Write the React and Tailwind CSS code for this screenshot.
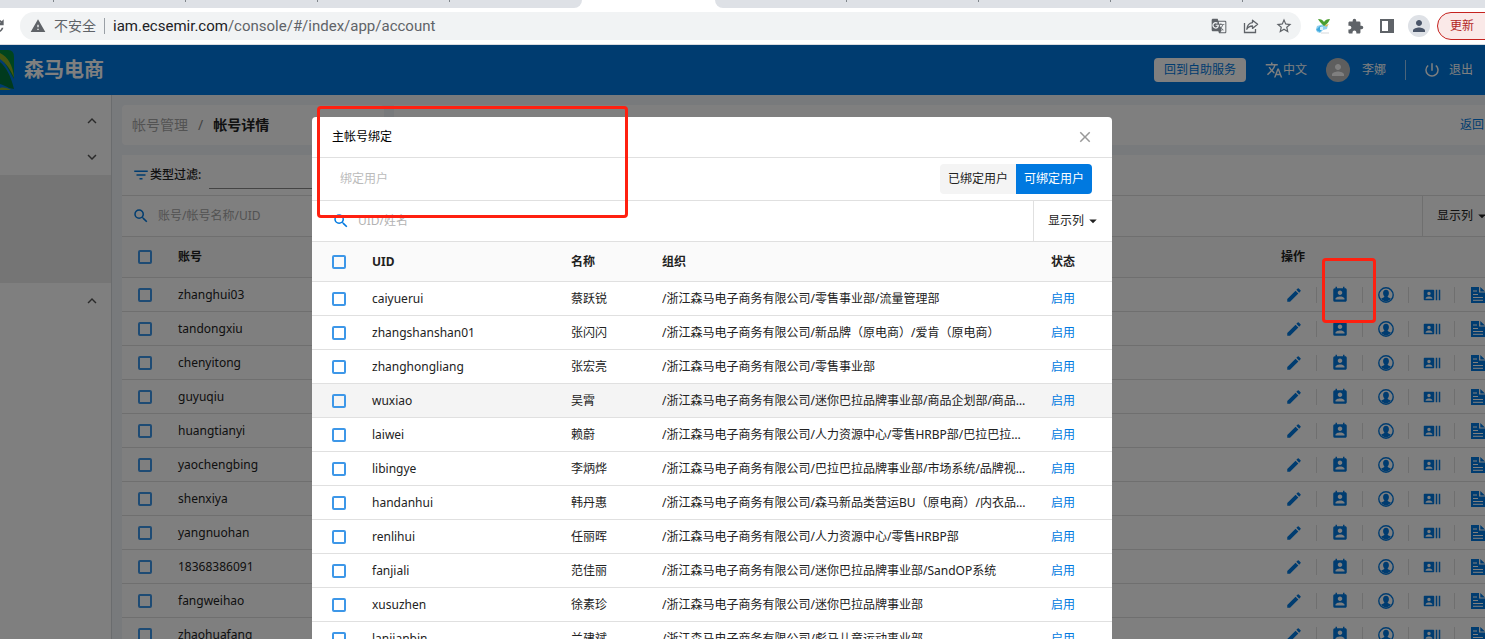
import React, { useState } from 'react';
import {
  MdRefresh,
  MdWarning,
  MdGTranslate,
  MdStarBorder,
  MdExtension,
  MdPerson,
  MdTranslate,
  MdPowerSettingsNew,
  MdExpandLess,
  MdExpandMore,
  MdFilterList,
  MdSearch,
  MdEdit,
  MdPermContactCalendar,
  MdRecentActors,
  MdArrowDropDown,
  MdClose
} from 'react-icons/md';

const accounts = [
  'zhanghui03',
  'tandongxiu',
  'chenyitong',
  'guyuqiu',
  'huangtianyi',
  'yaochengbing',
  'shenxiya',
  'yangnuohan',
  '18368386091',
  'fangweihao',
  'zhaohuafang'
];

const users = [
  { uid: 'caiyuerui', name: '蔡跃锐', org: '/浙江森马电子商务有限公司/零售事业部/流量管理部' },
  { uid: 'zhangshanshan01', name: '张闪闪', org: '/浙江森马电子商务有限公司/新品牌（原电商）/爱肯（原电商）' },
  { uid: 'zhanghongliang', name: '张宏亮', org: '/浙江森马电子商务有限公司/零售事业部' },
  { uid: 'wuxiao', name: '吴霄', org: '/浙江森马电子商务有限公司/迷你巴拉品牌事业部/商品企划部/商品企划组', active: true },
  { uid: 'laiwei', name: '赖蔚', org: '/浙江森马电子商务有限公司/人力资源中心/零售HRBP部/巴拉巴拉HRBP' },
  { uid: 'libingye', name: '李炳烨', org: '/浙江森马电子商务有限公司/巴拉巴拉品牌事业部/市场系统/品牌视觉部' },
  { uid: 'handanhui', name: '韩丹惠', org: '/浙江森马电子商务有限公司/森马新品类营运BU（原电商）/内衣品类部' },
  { uid: 'renlihui', name: '任丽晖', org: '/浙江森马电子商务有限公司/人力资源中心/零售HRBP部' },
  { uid: 'fanjiali', name: '范佳丽', org: '/浙江森马电子商务有限公司/迷你巴拉品牌事业部/SandOP系统' },
  { uid: 'xusuzhen', name: '徐素珍', org: '/浙江森马电子商务有限公司/迷你巴拉品牌事业部' },
  { uid: 'lanjianbin', name: '兰建斌', org: '/浙江森马电子商务有限公司/彪马儿童运动事业部' }
];

const Checkbox = ({ label }) => (
  <input
    type="checkbox"
    aria-label={label}
    className="block size-[14px] appearance-none rounded-xs border-2 border-[#3d97e8] checked:bg-[#3d97e8]"
  />
);

const ShareIcon = () => (
  <svg viewBox="0 0 16 16" className="size-4" fill="none" stroke="currentColor" strokeWidth="1.3">
    <path d="M1.5 5v9.5h11V11" />
    <path d="M9.5 2.2 14.6 6.300 9.500 10.400V8C6.800 8 5 9 3.800 11.200 4.200 7.300 6.200 5 9.500 4.600Z" strokeLinejoin="round" />
  </svg>
);

const BirdIcon = () => (
  <svg viewBox="0 0 16 16" className="size-4">
    <path d="M2 8 9 6l4 1-1 4-4 1-3 3-3-1-1-3Z" fill="#8fd0ef" />
    <path d="M1 12l4-4 3 2-3 4Z" fill="#3fa9de" />
    <path d="M5 9h3v3H5Z" fill="#d8f1fb" />
    <path d="M9 8C6 5 4 3 3 1c3 0 5 1 6 3 1-2 3-3 6-3-1 3-3 5-6 7Z" fill="#4a9e2f" />
    <path d="M10 7l4-1-3 3Z" fill="#e9b949" />
    <path d="M6 15h8" stroke="#d5d9dc" />
  </svg>
);

const SidePanelIcon = () => (
  <svg viewBox="0 0 14 14" className="size-[14px]">
    <path d="M0 0h14v14H0ZM2 2v10h6V2Z" fill="currentColor" fillRule="evenodd" />
  </svg>
);

const UserCircleIcon = () => (
  <svg viewBox="0 0 16 16" className="size-4">
    <circle cx="8" cy="8" r="7.200" fill="none" stroke="currentColor" strokeWidth="1.400" />
    <path d="M8 2.800c1.900 0 2.900 1.300 2.900 3.200 0 1.400-.5 2.600-1.300 3.200.1 1.200 1.300 1.500 3.300 2.400C11.800 13.300 10 14.500 8 14.500s-3.800-1.200-4.900-2.900C5.100 10.700 6.300 10.400 6.400 9.200 5.600 8.600 5.100 7.400 5.100 6c0-1.900 1-3.200 2.900-3.200Z" fill="currentColor" />
  </svg>
);

const FileIcon = () => (
  <svg viewBox="0 0 14 16" className="h-4 w-[14px]">
    <path d="M0 0h8v5.500h6V16H0ZM9.300 0 14 4.500H9.300Z" fill="currentColor" />
    <path d="M2 4h4M2 7.500h5M2 10.500h10M2 13.300h10" stroke="#fff" strokeWidth="1" />
  </svg>
);

const Logo = () => (
  <svg viewBox="0 0 14 40" className="h-10 w-[14px]">
    <path d="M0 0h8q6 0 6 7v22L0 5Z" fill="#008a3c" />
    <path d="M0 3c8 4 13 12 14 25C11 20 6 13 0 9Z" fill="#8fb022" />
    <path d="M0 12c6 5 11 14 14 27L9 38C6 36 3 35 0 34Z" fill="#00743a" />
    <path d="M0 38c4-1 8 0 11 2H0Z" fill="#8fb022" />
  </svg>
);

const TabMark = () => <span className="h-[2px] w-[132px] border-r border-[#80868b]" />;

const BrowserBar = () => (
  <div className="shrink-0 overflow-hidden border-b border-[#dadce0] bg-white">
    <div className="flex h-2 bg-white">
      <div className="flex w-[582px] rounded-br-lg bg-[#dee1e6]">
        <span className="h-[2px] w-[54px] border-r border-[#80868b]" />
        <TabMark />
        <TabMark />
        <TabMark />
      </div>
      <div className="w-[133px]" />
      <div className="flex flex-1 rounded-bl-lg bg-[#dee1e6]">
        <TabMark />
        <TabMark />
        <TabMark />
        <TabMark />
      </div>
    </div>
    <div className="-mr-4 flex h-9 items-center text-[#5f6368]">
      <button type="button" aria-label="重新加载" className="-ml-[13px] shrink-0">
        <MdRefresh size={20} />
      </button>
      <div className="ml-[13px] flex h-7 flex-1 items-center rounded-full bg-[#f1f3f4] pl-[10px] pr-2">
        <MdWarning size={16} />
        <span className="ml-2 text-sm">不安全</span>
        <span className="mx-2 h-4 w-px bg-[#9aa0a6]" />
        <span className="flex-1 font-[Roboto,sans-serif] text-[15px]">
          <span className="text-[#202124]">iam.ecsemir.com</span>/console/#/index/app/account
        </span>
        <div className="flex items-center gap-4">
          <MdGTranslate size={16} />
          <ShareIcon />
          <MdStarBorder size={18} />
        </div>
      </div>
      <div className="ml-[14px] flex items-center gap-4">
        <BirdIcon />
        <MdExtension size={17} />
        <SidePanelIcon />
      </div>
      <span className="ml-[14px] flex size-[22px] items-center justify-center rounded-full bg-[#dee1e6] text-[#4a5568]">
        <MdPerson size={18} />
      </span>
      <button type="button" className="ml-[7px] h-7 w-16 rounded-l-full border border-[#c5221f] bg-[#fae9e8] pl-3 text-left text-xs text-[#b3261e]">
        更新
      </button>
    </div>
  </div>
);

const TopBar = () => (
  <header className="flex h-[50px] shrink-0 items-center bg-[#0079e0] pr-3 text-xs text-white">
    <Logo />
    <h1 className="ml-[10px] text-xl font-bold">森马电商</h1>
    <button type="button" className="ml-auto h-6 rounded-sm bg-white px-[10px] text-[#0079e0]">
      回到自助服务
    </button>
    <button type="button" className="ml-[19px] flex items-center">
      <MdTranslate size={18} />
      中文
    </button>
    <span className="ml-[19px] flex size-6 items-center justify-center rounded-full bg-[#bdbdbd]">
      <MdPerson size={18} />
    </span>
    <span className="ml-3">李娜</span>
    <span className="ml-[19px] h-5 w-px bg-white/60" />
    <button type="button" className="ml-[17px] flex items-center gap-2">
      <MdPowerSettingsNew size={18} />
      退出
    </button>
  </header>
);

const SideBar = () => (
  <aside className="w-28 shrink-0 border-r border-[#d5d8dc] bg-white pt-2 text-[#555]">
    <button type="button" aria-label="收起菜单" className="flex h-9 w-full items-center justify-end pr-[10px]">
      <MdExpandLess size={18} />
    </button>
    <button type="button" aria-label="展开菜单" className="flex h-9 w-full items-center justify-end pr-[10px]">
      <MdExpandMore size={18} />
    </button>
    <div className="h-[108px] bg-[#ebebeb]" />
    <button type="button" aria-label="收起菜单" className="flex h-9 w-full items-center justify-end pr-[10px]">
      <MdExpandLess size={18} />
    </button>
  </aside>
);

const rowActions = [
  { label: '编辑', icon: <MdEdit size={18} /> },
  { label: '主帐号绑定', icon: <MdPermContactCalendar size={18} /> },
  { label: '用户', icon: <UserCircleIcon /> },
  { label: '身份', icon: <MdRecentActors size={18} /> },
  { label: '日志', icon: <FileIcon /> }
];

const AccountPage = () => (
  <main className="-mr-[15px] min-w-0 flex-1 bg-[#f0f4f9] pl-[10px] pt-[10px]">
    <div className="flex gap-[10px]">
      <nav className="flex h-10 w-[262px] items-center gap-[10px] rounded-sm bg-white px-[10px] text-sm">
        <a href="#accounts" className="text-[#a6a6a6]">帐号管理</a>
        <span className="text-[#888]">/</span>
        <span className="font-bold text-[#222]">帐号详情</span>
      </nav>
      <div className="flex h-10 flex-1 items-center justify-end bg-white pr-4 text-xs">
        <a href="#back" className="text-[#0079e0]">返回</a>
      </div>
    </div>

    <section className="mt-[10px] bg-white text-xs text-[#222]">
      <div className="flex h-[41px] items-center border-b border-[#dedede] pl-[10px]">
        <MdFilterList size={18} className="text-[#0079e0]" />
        <label htmlFor="type-filter" className="font-medium">类型过滤:</label>
        <input id="type-filter" type="text" className="ml-2 h-7 w-40 border-b border-[#888] outline-none" />
      </div>
      <div className="flex h-[41px] items-center border-b border-[#dedede] pl-[10px]">
        <MdSearch size={18} className="text-[#0079e0]" />
        <input
          type="text"
          aria-label="搜索帐号"
          placeholder="账号/帐号名称/UID"
          className="ml-2 min-w-0 flex-1 outline-none placeholder:text-[#a6a6a6]"
        />
        <button type="button" className="flex h-full w-[78px] items-center border-l border-[#dedede] pl-[14px]">
          显示列
          <MdArrowDropDown size={18} />
        </button>
      </div>
      <table className="w-full table-fixed border-separate border-spacing-0 text-left">
        <colgroup>
          <col className="w-[56px]" />
          <col />
          <col className="w-[229px]" />
        </colgroup>
        <thead>
          <tr className="h-[41px] bg-[#fafafa]">
            <th className="border-b border-[#dedede] pl-4"><Checkbox label="全选帐号" /></th>
            <th className="border-b border-[#dedede] font-bold">账号</th>
            <th className="border-b border-[#dedede] pl-[10px] font-bold">操作</th>
          </tr>
        </thead>
        <tbody>
          {accounts.map((account) => (
            <tr key={account} className="h-[34px]">
              <td className="border-b border-[#dedede] pl-4"><Checkbox label={account} /></td>
              <td className="border-b border-[#dedede]">{account}</td>
              <td className="border-b border-[#dedede]">
                <div className="flex text-[#0079e0]">
                  {rowActions.map((action) => (
                    <button
                      key={action.label}
                      type="button"
                      aria-label={action.label}
                      className="flex h-4 w-[46px] shrink-0 items-center justify-center border-r border-[#dedede] last:border-r-0"
                    >
                      {action.icon}
                    </button>
                  ))}
                </div>
              </td>
            </tr>
          ))}
        </tbody>
      </table>
    </section>
  </main>
);

const BindDialog = () => {
  const [tab, setTab] = useState('available');
  const on = 'bg-[#0079e0] text-white';
  const off = 'bg-[#f4f4f4] text-[#222]';

  return (
    <div role="dialog" aria-label="主帐号绑定" className="w-[800px] shrink-0 self-start rounded-t bg-white text-xs text-[#222]">
      <div className="flex h-[41px] items-center justify-between border-b border-[#e0e0e0] pl-5 pr-[18px]">
        <h2 className="text-black">主帐号绑定</h2>
        <button type="button" aria-label="关闭" className="text-[#999]">
          <MdClose size={18} />
        </button>
      </div>

      <div className="flex h-[43px] items-center border-b border-[#e0e0e0] pl-7 pr-5">
        <span className="flex-1 text-[#bbb]">绑定用户</span>
        <button
          type="button"
          onClick={() => setTab('bound')}
          className={`h-[30px] rounded-l px-2 ${tab === 'bound' ? on : off}`}
        >
          已绑定用户
        </button>
        <button
          type="button"
          onClick={() => setTab('available')}
          className={`h-[30px] rounded-r px-2 ${tab === 'available' ? on : off}`}
        >
          可绑定用户
        </button>
      </div>

      <div className="flex h-[41px] items-center border-b border-[#e0e0e0] pl-5">
        <MdSearch size={18} className="text-[#0079e0]" />
        <input
          type="text"
          aria-label="搜索用户"
          placeholder="UID/姓名"
          className="ml-2 min-w-0 flex-1 outline-none placeholder:text-[#b3b3b3]"
        />
        <button type="button" className="flex h-full w-[79px] items-center border-l border-[#e0e0e0] pl-[14px]">
          显示列
          <MdArrowDropDown size={18} />
        </button>
      </div>

      <table className="w-full table-fixed border-separate border-spacing-0 text-left">
        <colgroup>
          <col className="w-[60px]" />
          <col className="w-[199px]" />
          <col className="w-[91px]" />
          <col />
          <col className="w-[61px]" />
        </colgroup>
        <thead>
          <tr className="h-10 bg-[#fafafa]">
            <th className="border-b border-[#e0e0e0] pl-5"><Checkbox label="全选用户" /></th>
            <th className="border-b border-[#e0e0e0] font-bold">UID</th>
            <th className="border-b border-[#e0e0e0] font-bold">名称</th>
            <th className="border-b border-[#e0e0e0] font-bold">组织</th>
            <th className="border-b border-[#e0e0e0] font-bold">状态</th>
          </tr>
        </thead>
        <tbody>
          {users.map((user) => (
            <tr key={user.uid} className={user.active ? 'h-[34px] bg-[#f4f4f4]' : 'h-[34px]'}>
              <td className="border-b border-[#e0e0e0] pl-5"><Checkbox label={user.uid} /></td>
              <td className="border-b border-[#e0e0e0]">{user.uid}</td>
              <td className="border-b border-[#e0e0e0]">{user.name}</td>
              <td className="truncate border-b border-[#e0e0e0] pr-6">{user.org}</td>
              <td className="border-b border-[#e0e0e0]">
                <a href="#status" className="text-[#0079e0]">启用</a>
              </td>
            </tr>
          ))}
        </tbody>
      </table>
    </div>
  );
};

export default function App() {
  return (
    <div className="relative flex h-screen flex-col overflow-hidden bg-white font-['Noto_Sans','Noto_Sans_CJK_SC',sans-serif]">
      <BrowserBar />

      <div className="relative flex min-h-0 flex-1 flex-col overflow-hidden">
        <TopBar />
        <div className="flex flex-1">
          <SideBar />
          <AccountPage />
        </div>

        {/* Modal layer */}
        <div className="absolute inset-0 flex overflow-hidden bg-black/50 pl-78 pt-18">
          <BindDialog />
        </div>
      </div>

      {/* Highlight marks */}
      <div className="pointer-events-none absolute left-[317px] top-[106px] h-[112px] w-[311px] rounded-sm border-3 border-[#ff2010]" />
      <div className="pointer-events-none absolute left-[1322px] top-[258px] h-[65px] w-[54px] rounded-sm border-3 border-[#ff2010]" />
    </div>
  );
}
